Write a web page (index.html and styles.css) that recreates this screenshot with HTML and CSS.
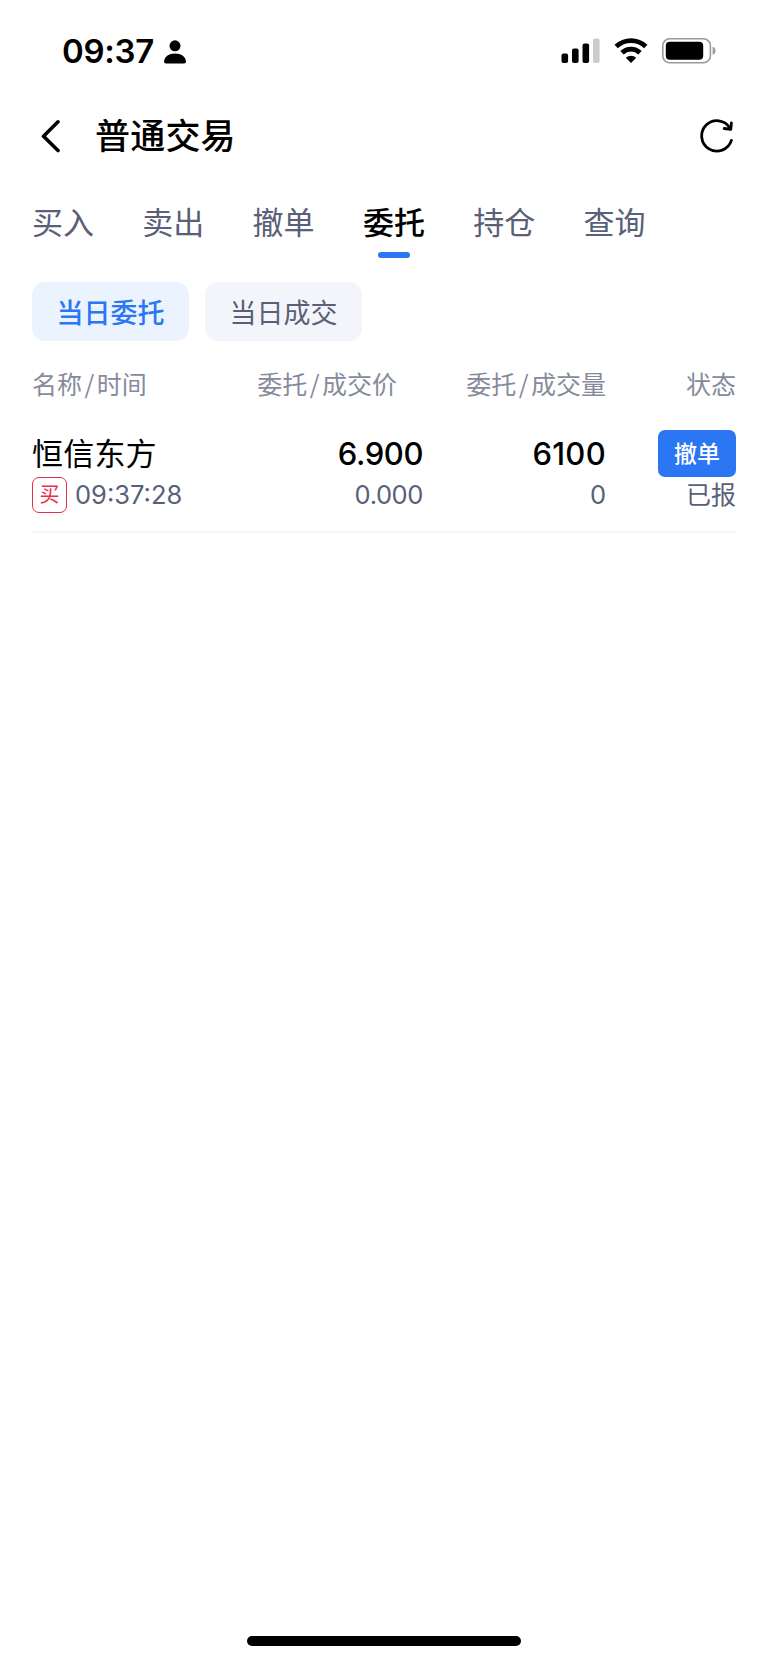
FILE: index.html
```html
<!DOCTYPE html>
<html lang="zh-CN">
<head>
    <meta charset="UTF-8">
    <meta name="viewport" content="width=device-width, initial-scale=1.0">
    <title>普通交易</title>
    <link rel="stylesheet" href="styles.css">
</head>
<body>
    <div class="status-bar">
        <span class="time">09:37</span>
        <svg class="person" width="22" height="24" viewBox="0 0 22 24">
            <circle cx="11" cy="5.8" r="5.5"/>
            <path d="M2 23.5Q0 23.5 0 21.5C0.6 16.5 5 13.6 11 13.6S21.4 16.5 22 21.5Q22 23.5 20 23.5Z"/>
        </svg>
        <div class="status-icons">
            <svg width="39" height="26" viewBox="0 0 39 26">
                <rect x="0.5" y="15.5" width="6.6" height="9.5" rx="2"/>
                <rect x="11" y="10.5" width="6.6" height="14.5" rx="2"/>
                <rect x="21.5" y="5.5" width="6.6" height="19.5" rx="2"/>
                <rect x="32" y="0.5" width="6.6" height="24.5" rx="2" fill="#ccc"/>
            </svg>
            <svg class="wifi" width="34" height="26" viewBox="0 0 34 26">
                <g fill="none" stroke="#000" stroke-width="4.8">
                    <path d="M2.2 8.6A21.3 21.3 0 0 1 31.8 8.6"/>
                    <path d="M8 14.8A13 13 0 0 1 26 14.8"/>
                </g>
                <path d="M17 25L11.8 19.8A7.6 7.6 0 0 1 22.2 19.8Z"/>
            </svg>
            <svg class="battery" width="54" height="26" viewBox="0 0 54 26">
                <rect x="0.8" y="0.8" width="47.6" height="24" rx="7" fill="none" stroke="#999" stroke-width="1.6"/>
                <rect x="3.8" y="3.8" width="37.4" height="18" rx="4"/>
                <path d="M50.6 8.8A4.2 4.2 0 0 1 50.6 16.8Z" fill="#999"/>
            </svg>
        </div>
    </div>

    <header class="nav">
        <svg class="back" width="20" height="34" viewBox="0 0 20 34">
            <path d="M17 2.8L2.5 17.3L17 31.5" fill="none" stroke="#000" stroke-width="3.6" stroke-linecap="round" stroke-linejoin="round"/>
        </svg>
        <h1>普通交易</h1>
        <svg class="refresh" width="34" height="36" viewBox="0 0 34 36">
            <path d="M31.4 22.4A15.2 15.2 0 1 1 30 10.2M31.4 5L30.8 11.4L24.2 10.5" fill="none" stroke="#000" stroke-width="2.8" stroke-linecap="round" stroke-linejoin="round"/>
        </svg>
    </header>

    <nav class="tabs">
        <a>买入</a>
        <a>卖出</a>
        <a>撤单</a>
        <a class="active">委托</a>
        <a>持仓</a>
        <a>查询</a>
    </nav>

    <div class="pills">
        <button type="button" class="pill selected">当日委托</button>
        <button type="button" class="pill">当日成交</button>
    </div>

    <main class="orders">
        <div class="order-head">
            <span>名称<b>/</b>时间</span>
            <span class="head-price">委托<b>/</b>成交价</span>
            <span>委托<b>/</b>成交量</span>
            <span>状态</span>
        </div>
        <div class="order">
            <div class="cell">
                <span class="name">恒信东方</span>
                <span class="sub"><i class="tag">买</i><span class="order-time">09:37:28</span></span>
            </div>
            <div class="cell price">
                <span class="num">6.900</span>
                <span class="sub">0.000</span>
            </div>
            <div class="cell volume">
                <span class="num">6100</span>
                <span class="sub">0</span>
            </div>
            <div class="cell">
                <button type="button" class="cancel">撤单</button>
                <span class="sub state">已报</span>
            </div>
        </div>
    </main>

    <div class="home-bar"></div>
</body>
</html>
```

FILE: styles.css
```css
* {
    box-sizing: border-box;
}

body {
    font-family: Inter, "Noto Sans CJK SC", sans-serif;
    margin: 0;
    min-height: 1663px;
    background-color: #fff;
    color: #000;
    display: flex;
    flex-direction: column;
}

button {
    font-family: inherit;
    border: none;
    padding: 0;
    cursor: pointer;
}

.status-bar {
    display: flex;
    align-items: center;
    height: 102px;
    padding: 0 52px 0 61px;
}

.time {
    font-size: 33px;
    font-weight: 600;
    line-height: 40px;
    letter-spacing: -0.3px;
    width: 103px;
    padding-left: 1px;
    white-space: nowrap;
}

.person {
    margin-top: 1px;
}

.status-icons {
    display: flex;
    align-items: center;
    margin-left: auto;
}

.wifi {
    margin-left: 14px;
}

.battery {
    margin-left: 14px;
}

.nav {
    display: flex;
    align-items: center;
    height: 68px;
    padding: 0 34px 0 41px;
}

.nav h1 {
    font-size: 35px;
    font-weight: 500;
    line-height: 48px;
    margin: 0 0 0 34px;
    letter-spacing: 0.2px;
}

.refresh {
    margin-left: auto;
}

.tabs {
    display: flex;
    gap: 48.3px;
    height: 88px;
    padding: 30px 32px 0;
}

.tabs a {
    font-size: 31px;
    line-height: 46px;
    color: #5a6078;
    height: 58px;
}

.tabs .active {
    color: #000;
    font-weight: 500;
}

.tabs .active::after {
    content: "";
    display: block;
    width: 32px;
    height: 6px;
    margin: 6px auto 0;
    border-radius: 3px;
    background-color: #2b76f3;
}

.pills {
    display: flex;
    gap: 16px;
    padding: 24px 32px 0;
}

.pill {
    width: 157px;
    height: 59px;
    border-radius: 13px;
    font-size: 27px;
    color: #5a6078;
    background-color: #f4f5fa;
}

.pill.selected {
    color: #2b76f3;
    font-weight: 500;
    background-color: #ebf3ff;
}

.orders {
    padding: 0 32px;
}

.order-head,
.order {
    display: grid;
    grid-template-columns: 190px 201px 183px 130px;
    text-align: right;
}

.order-head {
    font-size: 25px;
    line-height: 36px;
    padding-top: 26px;
    color: #868b9c;
}

.order-head b {
    font-family: "Noto Sans CJK SC", sans-serif;
    font-weight: 400;
    line-height: 1;
    padding: 0 2.5px;
}

.order-head span:first-child,
.cell:first-child {
    text-align: left;
}

.head-price {
    padding-right: 26px;
}

.order {
    padding-top: 27px;
    height: 130px;
    border-bottom: 2px solid #f4f5fb;
}

.cell {
    display: flex;
    flex-direction: column;
}

.name,
.num {
    font-size: 31px;
    line-height: 48px;
    height: 47px;
}

.name {
    letter-spacing: 0.2px;
}

.num {
    font-weight: 500;
}

.price {
    letter-spacing: -0.4px;
}

.volume .num {
    letter-spacing: 0.3px;
}

.sub {
    font-size: 25.5px;
    line-height: 36px;
    color: #5a6078;
}

.cell:first-child .sub {
    display: flex;
    align-items: center;
}

.state {
    font-size: 25px;
}

.tag {
    width: 35px;
    height: 36px;
    margin-right: 8px;
    border: 1.5px solid #ee2a4a;
    border-radius: 7px;
    color: #ee2a4a;
    font-size: 20px;
    font-style: normal;
    line-height: 35px;
    text-align: center;
}

.cancel {
    align-self: flex-end;
    width: 78px;
    height: 47px;
    padding-bottom: 3px;
    border-radius: 7px;
    font-size: 23px;
    font-weight: 500;
    color: #fff;
    background-color: #2b76f3;
}

.home-bar {
    width: 274px;
    height: 10px;
    margin: auto auto 17px;
    border-radius: 5px;
    background-color: #000;
}
```
